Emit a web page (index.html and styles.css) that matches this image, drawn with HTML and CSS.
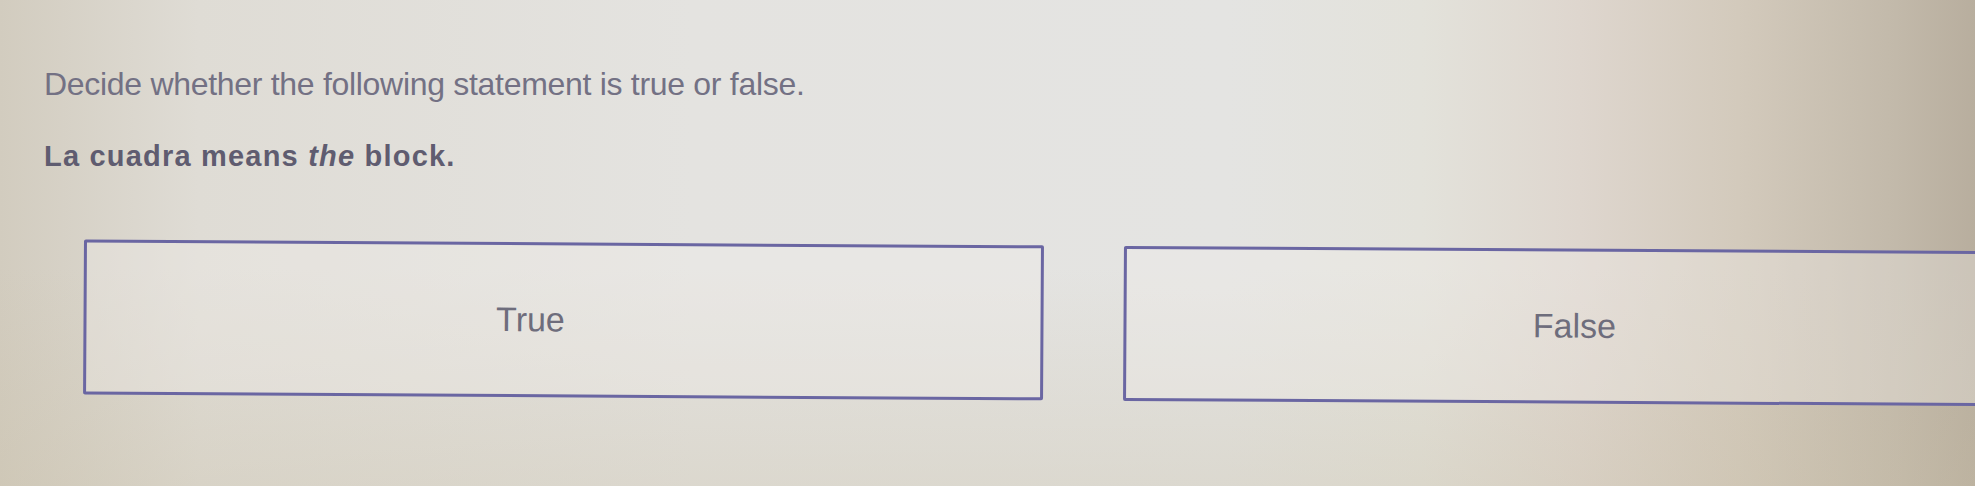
FILE: index.html
```html
<!DOCTYPE html>
<html>

<head>
    <meta charset="utf-8" />
    <title>True or false</title>
    <link rel="stylesheet" href="styles.css">
</head>

<body>
    <!-- question -->
    <div class="question">
        <p class="prompt">Decide whether the following statement is true or false.</p>
        <p class="statement">La cuadra means <i>the</i> block.</p>
    </div>

    <!-- answer choices -->
    <div class="choices">
        <div class="choice choice-true">True</div>
        <div class="choice choice-false">False</div>
    </div>
</body>

</html>
```

FILE: styles.css
```css
/* reset */
* {
    padding: 0;
    margin: 0;
    box-sizing: border-box;
}

body {
    width: 1975px;
    height: 486px;
    overflow: hidden;
    font-family: "Liberation Sans", Arial, sans-serif;
    color: #6f6d7d;
    /* screen glare: bright in the middle, warmer towards the edges */
    background:
        linear-gradient(180deg, rgba(255, 255, 255, 0) 55%, rgba(200, 190, 165, 0.3) 100%),
        linear-gradient(90deg, #d2ccbf 0%, #dfdcd5 10%, #e4e3e0 35%, #e4e4e2 62%, #e3e2db 72%, #ded6ce 80%, #d3cabc 88%, #c2b9aa 96%, #b8ae9e 100%);
}

/* question text */
.question {
    padding: 66px 0 0 44px;
}

.prompt {
    font-size: 32px;
    letter-spacing: -0.3px;
    color: #737184;
}

.statement {
    margin-top: 37px;
    font-size: 29px;
    font-weight: bold;
    letter-spacing: 1.2px;
    color: #5f5c70;
}

.statement i {
    font-style: italic;
}

/* choices row */
.choices {
    display: grid;
    grid-template-columns: 960px 960px;
    gap: 80px;
    margin-top: 66px;
    padding-left: 84px;
    transform: rotate(0.35deg);
    transform-origin: left top;
}

.choice {
    height: 155px;
    border: 3px solid #6a66a2;
    border-radius: 2px;
    background-color: rgba(240, 239, 235, 0.35);
    display: flex;
    justify-content: center;
    align-items: center;
    font-size: 34px;
    color: #6e6d7c;
}

.choice-true {
    padding: 0 66px 0 0;
}

.choice-false {
    padding: 0 58px 0 0;
}
```
